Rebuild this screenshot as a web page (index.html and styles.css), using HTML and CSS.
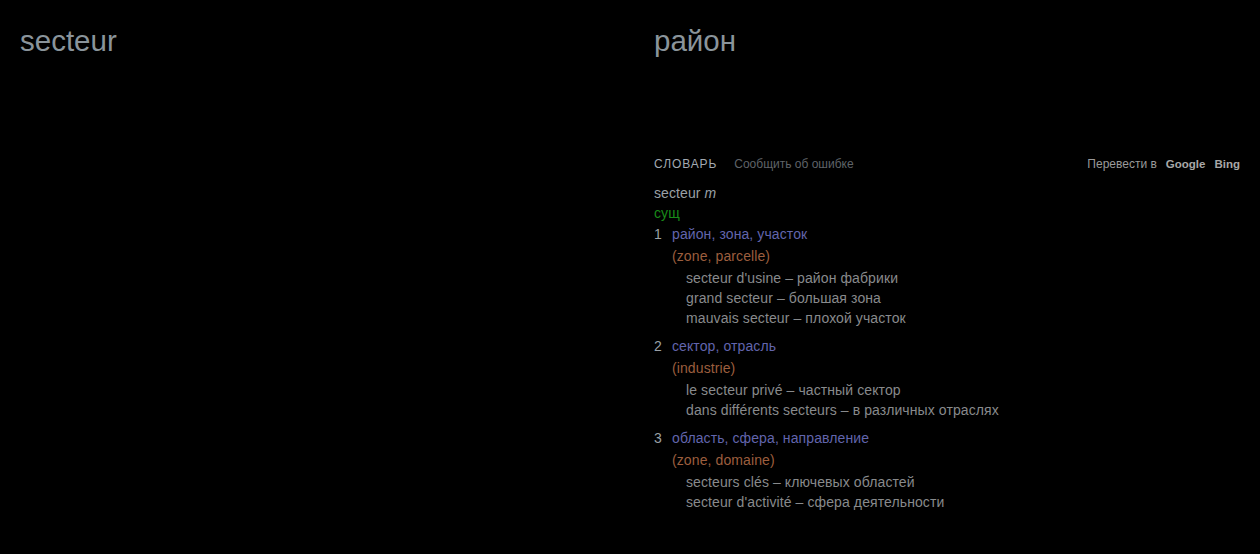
FILE: index.html
```html
<!DOCTYPE html>
<html lang="ru">
<head>
<meta charset="utf-8">
<link rel="stylesheet" href="styles.css">
</head>
<body>
<div class="page">
  <section class="col">
    <h1 class="title">secteur</h1>
  </section>
  <section class="col">
    <h1 class="title">район</h1>
    <div class="dict">
      <div class="dict-head">
        <div class="dict-left">
          <span class="dict-label">СЛОВАРЬ</span>
          <span class="report">Сообщить об ошибке</span>
        </div>
        <div class="dict-right">
          <span>Перевести в</span>
          <b>Google</b>
          <b>Bing</b>
        </div>
      </div>
      <div class="word">secteur <i>m</i></div>
      <div class="pos">сущ</div>
      <div class="sense">
        <div class="sense-line"><span class="num">1</span><span class="tr">район, зона, участок</span></div>
        <div class="syn">(zone, parcelle)</div>
        <div class="exs">
          <div class="ex">secteur d'usine – район фабрики</div>
          <div class="ex">grand secteur – большая зона</div>
          <div class="ex">mauvais secteur – плохой участок</div>
        </div>
      </div>
      <div class="sense">
        <div class="sense-line"><span class="num">2</span><span class="tr">сектор, отрасль</span></div>
        <div class="syn">(industrie)</div>
        <div class="exs">
          <div class="ex">le secteur privé – частный сектор</div>
          <div class="ex">dans différents secteurs – в различных отраслях</div>
        </div>
      </div>
      <div class="sense">
        <div class="sense-line"><span class="num">3</span><span class="tr">область, сфера, направление</span></div>
        <div class="syn">(zone, domaine)</div>
        <div class="exs">
          <div class="ex">secteurs clés – ключевых областей</div>
          <div class="ex">secteur d'activité – сфера деятельности</div>
        </div>
      </div>
    </div>
  </section>
</div>
</body>
</html>
```
FILE: styles.css
```css
html, body {
  margin: 0;
  padding: 0;
  background: #000;
  height: 100%;
}
body {
  font-family: "Liberation Sans", Arial, sans-serif;
  color: #999;
}
.page {
  display: grid;
  grid-template-columns: 1fr 1fr;
  column-gap: 48px;
  padding: 0 20px;
}
.col {
  min-width: 0;
}
.title {
  margin: 0;
  padding-top: 23px;
  font-size: 29.5px;
  line-height: 36px;
  font-weight: normal;
  color: #8a949b;
  height: 131px;
}
.dict {
  font-size: 14px;
  letter-spacing: 0.1px;
}
.dict-head {
  display: flex;
  justify-content: space-between;
  align-items: center;
  height: 20px;
  margin-bottom: 8px;
  font-size: 12px;
  letter-spacing: 0;
}
.dict-left {
  display: flex;
  gap: 17px;
  align-items: center;
}
.dict-label {
  color: #a3aab2;
  letter-spacing: 0.9px;
}
.report {
  color: #5f6368;
}
.dict-right {
  display: flex;
  align-items: baseline;
  gap: 9px;
  color: #9a9a9a;
}
.dict-right b {
  font-size: 11.5px;
  color: #a8a8a8;
  font-weight: bold;
}
.word {
  line-height: 22px;
  color: #9aa0a6;
}
.word i {
  font-style: italic;
}
.pos {
  line-height: 18px;
  padding-bottom: 2px;
  color: #198a19;
}
.sense {
  margin-bottom: 8px;
}
.sense-line {
  display: flex;
  line-height: 20px;
  padding-bottom: 2px;
}
.num {
  width: 18px;
  color: #9aa0a6;
}
.tr {
  color: #6265ad;
}
.syn {
  padding-left: 18px;
  line-height: 20px;
  padding-bottom: 2px;
  color: #9c5e3e;
}
.ex {
  padding-left: 32px;
  line-height: 20px;
  color: #888a8c;
}
```
